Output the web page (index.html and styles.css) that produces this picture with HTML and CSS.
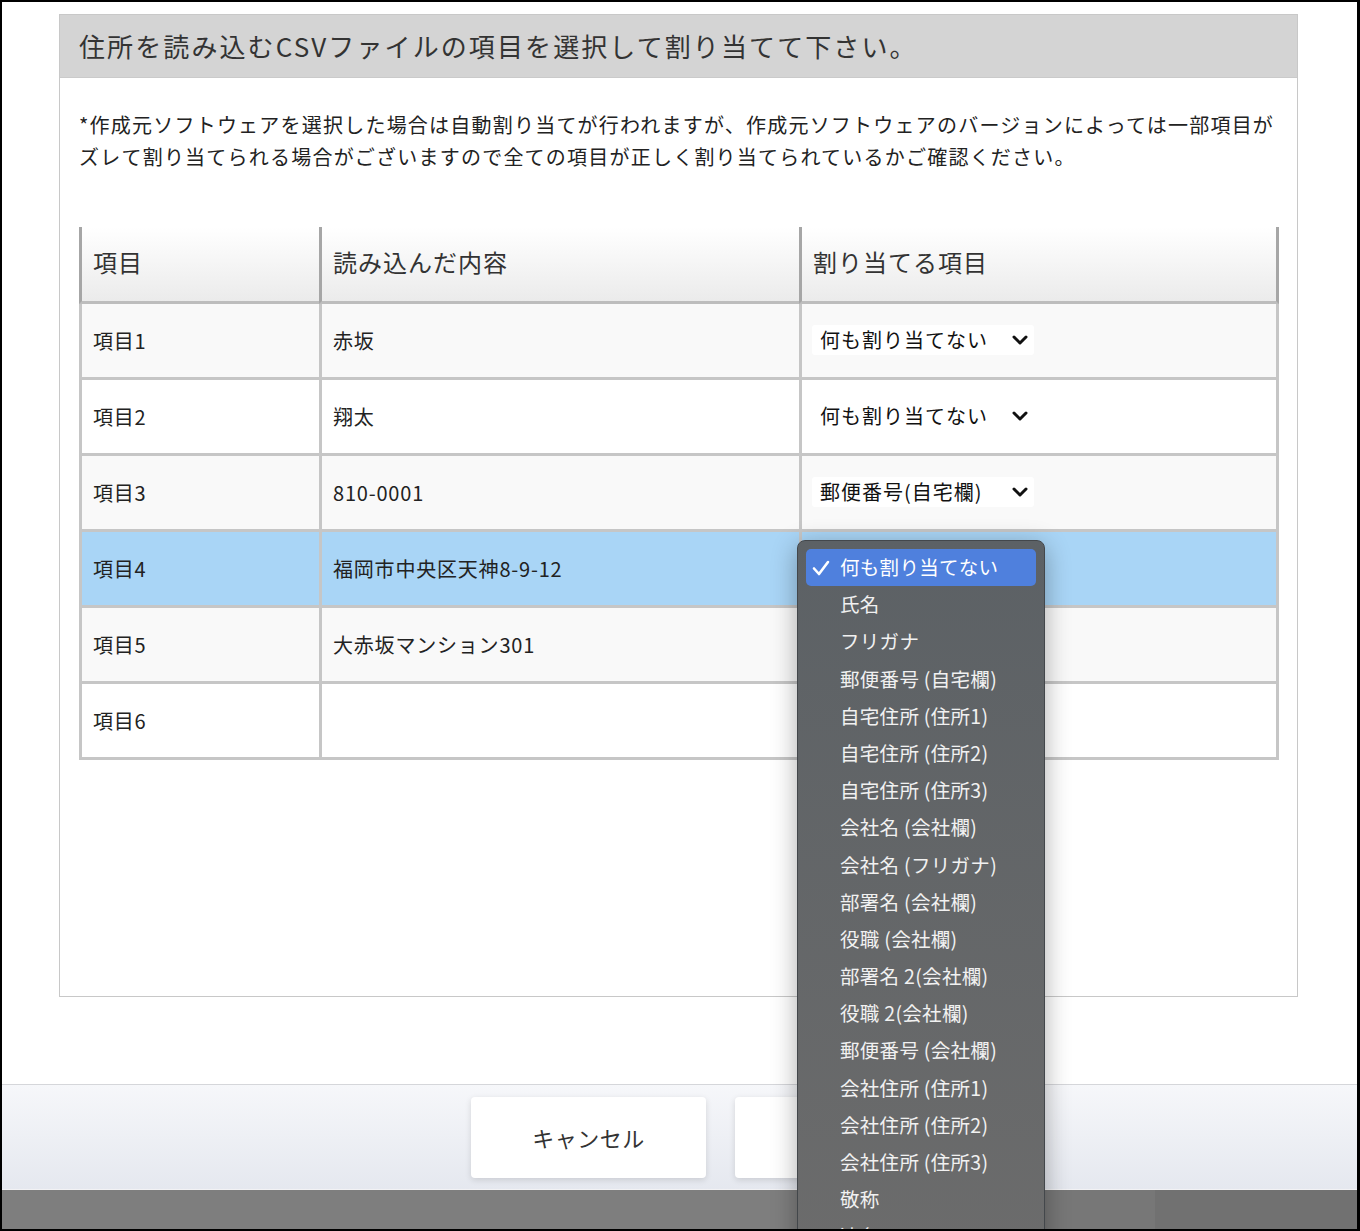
FILE: index.html
```html
<!DOCTYPE html>
<html lang="ja">
<head>
<meta charset="utf-8">
<title>CSV項目の割り当て</title>
<link rel="stylesheet" href="styles.css">
</head>
<body>
<div class="screen">
  <main class="main">
    <section class="panel">
      <h1 class="panel-title">住所を読み込むCSVファイルの項目を選択して割り当てて下さい。</h1>
      <p class="note">*作成元ソフトウェアを選択した場合は自動割り当てが行われますが、作成元ソフトウェアのバージョンによっては一部項目が<br>ズレて割り当てられる場合がございますので全ての項目が正しく割り当てられているかご確認ください。</p>
      <table class="map">
        <colgroup><col class="c1"><col class="c2"><col class="c3"></colgroup>
        <thead>
          <tr><th>項目</th><th>読み込んだ内容</th><th>割り当てる項目</th></tr>
        </thead>
        <tbody>
          <tr class="alt"><td>項目1</td><td>赤坂</td><td><span class="select"><span>何も割り当てない</span><svg class="chev" viewBox="0 0 16 10" width="16" height="10"><polyline points="2,2 8,8 14,2"/></svg></span></td></tr>
          <tr><td>項目2</td><td>翔太</td><td><span class="select"><span>何も割り当てない</span><svg class="chev" viewBox="0 0 16 10" width="16" height="10"><polyline points="2,2 8,8 14,2"/></svg></span></td></tr>
          <tr class="alt"><td>項目3</td><td>810-0001</td><td><span class="select"><span>郵便番号(自宅欄)</span><svg class="chev" viewBox="0 0 16 10" width="16" height="10"><polyline points="2,2 8,8 14,2"/></svg></span></td></tr>
          <tr class="active"><td>項目4</td><td>福岡市中央区天神8-9-12</td><td><span class="select"><span>何も割り当てない</span><svg class="chev" viewBox="0 0 16 10" width="16" height="10"><polyline points="2,2 8,8 14,2"/></svg></span></td></tr>
          <tr class="alt"><td>項目5</td><td>大赤坂マンション301</td><td><span class="select"><span>何も割り当てない</span><svg class="chev" viewBox="0 0 16 10" width="16" height="10"><polyline points="2,2 8,8 14,2"/></svg></span></td></tr>
          <tr><td>項目6</td><td></td><td><span class="select"><span>何も割り当てない</span><svg class="chev" viewBox="0 0 16 10" width="16" height="10"><polyline points="2,2 8,8 14,2"/></svg></span></td></tr>
        </tbody>
      </table>
    </section>
  </main>
  <footer class="footer">
    <button class="btn" type="button">キャンセル</button>
    <button class="btn" type="button">次へ</button>
  </footer>
  <div class="taskbar"></div>

  <ul class="menu">
    <li class="menu-item selected"><svg class="check" viewBox="0 0 18 16" width="18" height="16"><polyline points="2,8.5 7,14 16,2"/></svg>何も割り当てない</li>
    <li class="menu-item">氏名</li>
    <li class="menu-item">フリガナ</li>
    <li class="menu-item">郵便番号 (自宅欄)</li>
    <li class="menu-item">自宅住所 (住所1)</li>
    <li class="menu-item">自宅住所 (住所2)</li>
    <li class="menu-item">自宅住所 (住所3)</li>
    <li class="menu-item">会社名 (会社欄)</li>
    <li class="menu-item">会社名 (フリガナ)</li>
    <li class="menu-item">部署名 (会社欄)</li>
    <li class="menu-item">役職 (会社欄)</li>
    <li class="menu-item">部署名 2(会社欄)</li>
    <li class="menu-item">役職 2(会社欄)</li>
    <li class="menu-item">郵便番号 (会社欄)</li>
    <li class="menu-item">会社住所 (住所1)</li>
    <li class="menu-item">会社住所 (住所2)</li>
    <li class="menu-item">会社住所 (住所3)</li>
    <li class="menu-item">敬称</li>
    <li class="menu-item">連名</li>
  </ul>
</div>
</body>
</html>
```

FILE: styles.css
```css
* { box-sizing: border-box; }

html, body {
  margin: 0;
  padding: 0;
  background: #000;
}

body {
  font-family: "Noto Sans CJK JP", "Noto Sans", sans-serif;
  color: #333;
}

.screen {
  position: relative;
  width: 1360px;
  height: 1231px;
  border: 2px solid #000;
  border-right-width: 3px;
  background: #fff;
  overflow: hidden;
  display: flex;
  flex-direction: column;
}

.main {
  flex: 1;
  padding: 12px 0 0 57px;
}

.panel {
  width: 1239px;
  border: 1px solid #c8c8c8;
  padding-bottom: 236px;
}

.panel-title {
  margin: 0;
  height: 63px;
  background: #d4d4d4;
  border-bottom: 1px solid #cacaca;
  padding-left: 19px;
  font-size: 26px;
  font-weight: 400;
  line-height: 61px;
  letter-spacing: 2.1px;
  color: #333;
}

.note {
  margin: 31px 0 0 19px;
  font-size: 20px;
  line-height: 32px;
  letter-spacing: 1.22px;
  color: #222;
  white-space: nowrap;
}

.map {
  margin: 54px 0 0 19px;
  width: 1200px;
  table-layout: fixed;
  border-collapse: separate;
  border-spacing: 0;
}

.map .c1 { width: 240px; }
.map .c2 { width: 480px; }
.map .c3 { width: 480px; }

.map th {
  height: 77px;
  padding: 0 0 5px 11px;
  text-align: left;
  vertical-align: middle;
  font-size: 24px;
  font-weight: 400;
  letter-spacing: 1px;
  color: #333;
  background: linear-gradient(#ffffff, #ebebeb);
  border-left: 3px solid #a6a6a6;
  border-bottom: 3px solid #bdbdbd;
}

.map th:last-child {
  border-right: 3px solid #a6a6a6;
}

.map td {
  height: 76px;
  padding: 0 0 0 11px;
  vertical-align: middle;
  font-size: 20px;
  letter-spacing: 0.8px;
  color: #222;
  background: #fff;
  border-left: 3px solid #c6c6c6;
  border-bottom: 3px solid #c6c6c6;
}

.map td:last-child {
  border-right: 3px solid #c6c6c6;
  padding-left: 10px;
}

.map tr.alt td { background: #f9f9f9; }
.map tr.active td { background: #a9d5f6; }

.select {
  display: inline-flex;
  align-items: center;
  justify-content: space-between;
  width: 222px;
  height: 30px;
  margin-bottom: 2px;
  padding: 0 6px 0 8px;
  background: #fff;
  border-radius: 3px;
  font-size: 20px;
  letter-spacing: 1px;
  color: #111;
}

.chev {
  fill: none;
  stroke: #111;
  stroke-width: 3;
  stroke-linecap: round;
  stroke-linejoin: round;
}

.footer {
  height: 106px;
  flex: none;
  border-top: 1px solid #d5d6da;
  border-bottom: 1px solid #f2f2f4;
  background: linear-gradient(#f6f7fa, #e5e8ef);
  display: flex;
  align-items: center;
  gap: 29px;
  padding-left: 469px;
}

.btn {
  width: 235px;
  height: 81px;
  border: none;
  border-radius: 4px;
  background: #fff;
  box-shadow: 0 2px 6px rgba(0, 0, 0, 0.13);
  font-family: inherit;
  font-size: 22px;
  letter-spacing: 0.5px;
  color: #333;
}

.taskbar {
  height: 39px;
  flex: none;
  background: linear-gradient(to right, #7e7e7e 0, #7e7e7e 1043px, #777 1043px, #777 1153px, #717171 1153px);
}

.menu {
  position: absolute;
  left: 795px;
  top: 538px;
  width: 248px;
  height: 740px;
  margin: 0;
  padding: 8px 8px;
  list-style: none;
  border: 1px solid #43474b;
  border-radius: 8px;
  background: linear-gradient(#5c6165, #6c6c6c);
  box-shadow: 0 6px 26px rgba(0, 0, 0, 0.32);
}

.menu-item {
  position: relative;
  height: 37.2px;
  line-height: 36px;
  padding-left: 34px;
  font-size: 19.5px;
  letter-spacing: 0.3px;
  color: #f1f1f1;
  white-space: nowrap;
}

.menu-item.selected {
  background: #4f80dd;
  border-radius: 5px;
  color: #fff;
}

.check {
  position: absolute;
  left: 6px;
  top: 11px;
  fill: none;
  stroke: #fff;
  stroke-width: 2.6;
  stroke-linecap: round;
  stroke-linejoin: round;
}
```
